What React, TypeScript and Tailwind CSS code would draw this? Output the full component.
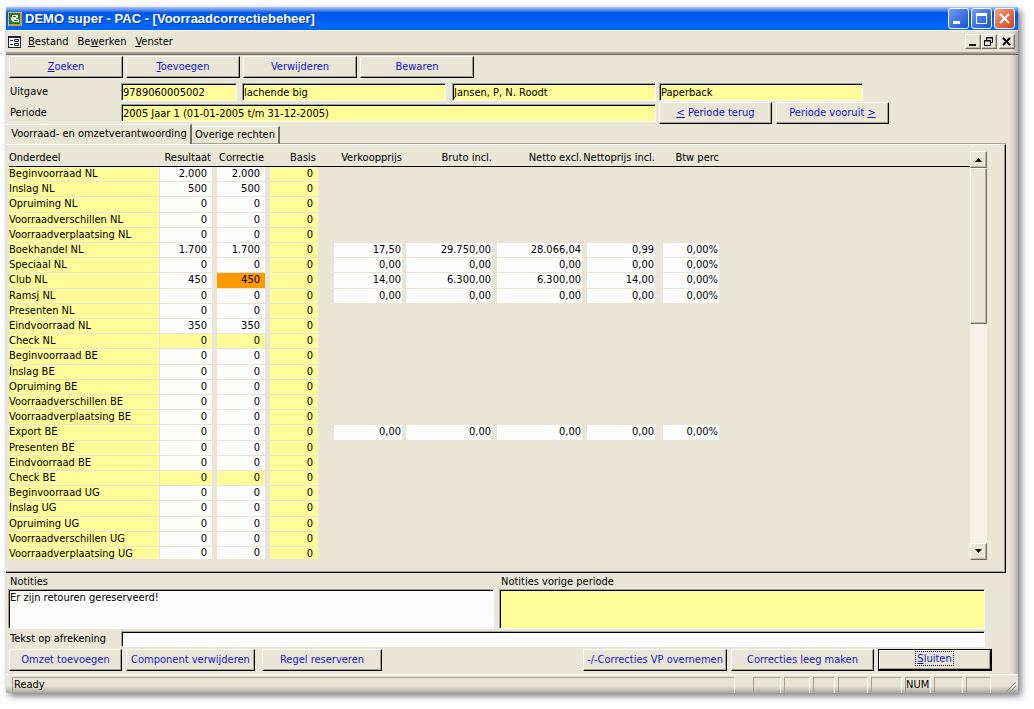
import { useState } from "react";
import type { ReactNode } from "react";
import clsx from "clsx";

interface StockRow {
  name: string;
  result: string;
  correction: string;
  prices?: string[];
  check?: boolean;
  active?: boolean;
}

const zero = (name: string): StockRow => ({ name, result: "0", correction: "0" });

const rows: StockRow[] = [
  { name: "Beginvoorraad NL", result: "2.000", correction: "2.000" },
  { name: "Inslag NL", result: "500", correction: "500" },
  zero("Opruiming NL"),
  zero("Voorraadverschillen NL"),
  zero("Voorraadverplaatsing NL"),
  {
    name: "Boekhandel NL",
    result: "1.700",
    correction: "1.700",
    prices: ["17,50", "29.750,00", "28.066,04", "0,99", "0,00%"],
  },
  { ...zero("Speciaal NL"), prices: ["0,00", "0,00", "0,00", "0,00", "0,00%"] },
  {
    name: "Club NL",
    result: "450",
    correction: "450",
    active: true,
    prices: ["14,00", "6.300,00", "6.300,00", "14,00", "0,00%"],
  },
  { ...zero("Ramsj NL"), prices: ["0,00", "0,00", "0,00", "0,00", "0,00%"] },
  zero("Presenten NL"),
  { name: "Eindvoorraad NL", result: "350", correction: "350" },
  { ...zero("Check NL"), check: true },
  zero("Beginvoorraad BE"),
  zero("Inslag BE"),
  zero("Opruiming BE"),
  zero("Voorraadverschillen BE"),
  zero("Voorraadverplaatsing BE"),
  { ...zero("Export BE"), prices: ["0,00", "0,00", "0,00", "0,00", "0,00%"] },
  zero("Presenten BE"),
  zero("Eindvoorraad BE"),
  { ...zero("Check BE"), check: true },
  zero("Beginvoorraad UG"),
  zero("Inslag UG"),
  zero("Opruiming UG"),
  zero("Voorraadverschillen UG"),
  zero("Voorraadverplaatsing UG"),
];

const priceColumns = [
  { label: "Verkoopprijs", gap: "pr-1" },
  { label: "Bruto incl.", gap: "pr-[5px]" },
  { label: "Netto excl.", gap: "pr-[5px]" },
  { label: "Nettoprijs incl.", gap: "pr-2" },
  { label: "Btw perc", gap: "pr-[2px]" },
];

const raised =
  "border border-t-white border-l-white border-r-black border-b-black shadow-[inset_-1px_-1px_0_#a5a192]";
const sunken =
  "border border-t-[#a5a192] border-l-[#a5a192] border-r-white border-b-white shadow-[inset_1px_1px_0_#000]";
const small =
  "border border-t-white border-l-white border-r-[#6f6c60] border-b-[#6f6c60] shadow-[inset_-1px_-1px_0_#bdb9a9] bg-[#e9e6d7]";

function PushButton({ className, children }: { className?: string; children: ReactNode }) {
  return (
    <button type="button" className={clsx("h-[22px] whitespace-nowrap text-[#1616c8]", raised, className)}>
      {children}
    </button>
  );
}

function Field({ label, value, className }: { label: string; value: string; className?: string }) {
  return (
    <input
      aria-label={label}
      readOnly
      value={value}
      className={clsx("h-[18px] min-w-0 bg-[#fdfc99] pl-px outline-none", sunken, className)}
    />
  );
}

function Cell({
  label,
  value,
  tall,
  fill = "bg-[#fdfdfd]",
  pad = "pr-[5px]",
}: {
  label: string;
  value: string;
  tall: boolean;
  fill?: string;
  pad?: string;
}) {
  return (
    <input
      aria-label={label}
      defaultValue={value}
      className={clsx(
        "block h-full w-full border-b border-[#e9e6d7] text-right outline-none",
        tall && "pb-px",
        fill,
        pad,
      )}
    />
  );
}

function TitleBar() {
  return (
    <header className="flex h-[23px] items-center bg-linear-to-b from-[#a9c8f6] via-[#0055e5] via-25% to-[#0066ff] to-80% pr-[3px] pl-[2px]">
      <svg width="14" height="14" viewBox="0 0 14 14" aria-hidden="true">
        <rect width="14" height="14" fill="#e8b84a" />
        <rect x="1" y="1" width="11" height="11" fill="#1d7a35" />
        <path d="M4 3h6v3H8v1h3v3H5L3 8V6l1-1z" fill="#eef3d8" />
        <path d="M5 4h3v1H5zM6 8h4v1H6z" fill="#1d7a35" />
        <path d="M13 1v12H1" fill="none" stroke="#b9822a" />
      </svg>
      <h1 className="ml-[3px] flex-1 font-['Liberation_Sans',Arial,sans-serif] text-[13px] leading-[20px] font-bold whitespace-nowrap text-white [text-shadow:1px_1px_0_#003399]">
        DEMO super - PAC - [Voorraadcorrectiebeheer]
      </h1>
      <div className="flex gap-[2px]">
        <button
          type="button"
          aria-label="Minimaliseren"
          className="h-[21px] w-[21px] rounded-[3px] border border-white bg-linear-to-br from-[#6f9cf5] to-[#1c4fd0]"
        >
          <svg width="19" height="19" viewBox="0 0 19 19">
            <rect x="4" y="12" width="7" height="3" fill="#fff" />
          </svg>
        </button>
        <button
          type="button"
          aria-label="Maximaliseren"
          className="h-[21px] w-[21px] rounded-[3px] border border-white bg-linear-to-br from-[#6f9cf5] to-[#1c4fd0]"
        >
          <svg width="19" height="19" viewBox="0 0 19 19">
            <path d="M4.500 4.500h10v10h-10z" fill="none" stroke="#fff" />
            <rect x="4" y="4" width="11" height="3" fill="#fff" />
          </svg>
        </button>
        <button
          type="button"
          aria-label="Afsluiten"
          className="h-[21px] w-[21px] rounded-[3px] border border-white bg-linear-to-br from-[#f0a080] to-[#cf3a12]"
        >
          <svg width="19" height="19" viewBox="0 0 19 19">
            <path d="M5 5l9 9M14 5l-9 9" stroke="#fff" strokeWidth="2" />
          </svg>
        </button>
      </div>
    </header>
  );
}

function MenuBar() {
  return (
    <div className="flex h-6 items-center border-t border-t-white border-b-2 border-b-[#a5a192] pr-[3px] pl-[2px]">
      <svg width="13" height="12" viewBox="0 0 13 12" aria-hidden="true">
        <rect x=".5" y=".5" width="12" height="11" fill="#fff" stroke="#1c2340" />
        <rect x="1" y="1" width="11" height="1" fill="#1c2340" />
        <path d="M2 4.500h3M2 8.500h3" stroke="#1c2340" />
        <path d="M6.500 3.500h4v2h-4zM6.500 7.500h4v2h-4z" fill="none" stroke="#1c2340" />
      </svg>
      <nav className="ml-[7px] flex flex-1 gap-[9px]">
        <button type="button"><u>B</u>estand</button>
        <button type="button">Be<u>w</u>erken</button>
        <button type="button"><u>V</u>enster</button>
      </nav>
      <div className="flex">
        <button type="button" aria-label="Venster minimaliseren" className={clsx("h-[15px] w-4", small)}>
          <svg width="14" height="13" viewBox="0 0 14 13">
            <rect x="3" y="9" width="7" height="2" />
          </svg>
        </button>
        <button type="button" aria-label="Venster herstellen" className={clsx("h-[15px] w-4", small)}>
          <svg width="14" height="13" viewBox="0 0 14 13" fill="none" stroke="#000">
            <path d="M4.500 5V2.500h6v5H9M4 3h7M2.500 5.500h6v5h-6zM2 6h7" />
          </svg>
        </button>
        <button type="button" aria-label="Venster sluiten" className={clsx("ml-[2px] h-[15px] w-4", small)}>
          <svg width="14" height="13" viewBox="0 0 14 13">
            <path d="M3 3l7 7M10 3l-7 7" stroke="#000" strokeWidth="2" />
          </svg>
        </button>
      </div>
    </div>
  );
}

function StockTable() {
  return (
    <table className="w-full table-fixed border-collapse">
      <colgroup>
        <col className="w-[151px]" />
        <col className="w-[57px]" />
        <col className="w-[53px]" />
        <col className="w-[64px]" />
        <col className="w-[72px]" />
        <col className="w-[91px]" />
        <col className="w-[90px]" />
        <col className="w-[76px]" />
        <col className="w-[58px]" />
        <col />
      </colgroup>
      <thead>
        <tr className="h-[15px] border-b border-black text-right whitespace-nowrap [&>th]:p-0 [&>th]:font-normal">
          <th className="text-left">Onderdeel</th>
          <th><span className="mr-[6px]">Resultaat</span></th>
          <th><span className="mr-[6px]">Correctie</span></th>
          <th><span className="mr-[18px]">Basis</span></th>
          {priceColumns.map((column) => (
            <th key={column.label}>
              <span className={clsx("flex justify-end", column.gap)}>{column.label}</span>
            </th>
          ))}
          <th />
        </tr>
      </thead>
      <tbody>
        {rows.map((row, i) => {
          const fill = row.check ? "bg-[#fdfc99]" : "bg-[#fdfdfd]";
          // every fifth row is a pixel taller, the last one is clipped by the form
          const tall = i % 5 === 2;
          const height = i === rows.length - 1 ? "h-[13px]" : tall ? "h-4" : "h-[15px]";
          return (
            <tr key={row.name} className={height}>
              <td className="p-0 pr-px">
                <div className={clsx("border-b border-[#e9e6d7] bg-[#fdfc99] leading-[14px]", height)}>{row.name}</div>
              </td>
              <td className="p-0 pr-[5px]">
                <div className={height}>
                  <Cell label={`${row.name} resultaat`} value={row.result} tall={tall} fill={fill} />
                </div>
              </td>
              <td className="p-0 pr-[5px]">
                <div className={height}>
                  <Cell
                    label={`${row.name} correctie`}
                    value={row.correction}
                    tall={tall}
                    fill={row.active ? "bg-[#ff9900]" : fill}
                  />
                </div>
              </td>
              <td className="p-0 pr-4">
                <div className={clsx("border-b border-[#e9e6d7] bg-[#fdfc99] pr-[5px] text-right leading-[14px]", height)}>
                  0
                </div>
              </td>
              {priceColumns.map((column, c) => (
                <td key={column.label} className={clsx("p-0", column.gap)}>
                  {row.prices && (
                    <div className={height}>
                      <Cell label={`${row.name} ${column.label}`} value={row.prices[c]} tall={tall} pad="pr-px" />
                    </div>
                  )}
                </td>
              ))}
              <td className="p-0" />
            </tr>
          );
        })}
      </tbody>
    </table>
  );
}

function ScrollBar() {
  return (
    <div className="flex w-[17px] flex-col bg-[#f5f3ea]">
      <button type="button" aria-label="Omhoog" className={clsx("flex h-[17px] items-center justify-center", small)}>
        <svg width="7" height="4" viewBox="0 0 7 4">
          <path d="M0 4l3.500-4L7 4z" />
        </svg>
      </button>
      <div className={clsx("h-[156px]", small)} />
      <div className="flex-1" />
      <button type="button" aria-label="Omlaag" className={clsx("flex h-[17px] items-center justify-center", small)}>
        <svg width="7" height="4" viewBox="0 0 7 4">
          <path d="M0 0l3.500 4L7 0z" />
        </svg>
      </button>
    </div>
  );
}

function StatusBar() {
  const slots = [
    { width: "w-7", text: "" },
    { width: "w-[26px]", text: "" },
    { width: "w-[22px]", text: "" },
    { width: "w-[30px]", text: "" },
    { width: "w-[31px]", text: "" },
    { width: "w-[26px]", text: "NUM" },
    { width: "w-[29px]", text: "" },
    { width: "w-[25px]", text: "" },
  ];
  const slot = "h-4 border-t border-l border-r border-t-[#a5a192] border-l-[#a5a192] border-r-white";
  return (
    <footer className="mt-[3px] flex h-[19px] items-end gap-[3px] border-t border-white bg-linear-to-b from-[#e9e6d7] from-60% to-[#a8a69d] pl-[6px]">
      <div className={clsx("mr-[15px] flex-1 pl-px", slot)}>Ready</div>
      {slots.map((s, i) => (
        <div key={i} className={clsx("shrink-0", slot, s.width)}>
          {s.text}
        </div>
      ))}
      <svg width="24" height="14" viewBox="0 0 24 14" className="shrink-0" stroke="#96938a">
        <path d="M11 14L22 3M15 14l7-7M19 14l3-3" />
      </svg>
    </footer>
  );
}

export default function App() {
  const [notes, setNotes] = useState("Er zijn retouren gereserveerd!");
  const [statement, setStatement] = useState("");

  return (
    <div className="bg-white pt-[7px] pr-4 pb-4 pl-[6px] font-['DejaVu_Sans_Condensed','DejaVu_Sans',sans-serif] text-[11px] leading-[14px] text-black">
      <div className="rounded-t-[4px] bg-[#e9e6d7] shadow-[3px_3px_7px_#77777f,inset_-6px_0_6px_-3px_#a8a69d]">
        <TitleBar />
        <MenuBar />

        <main className="border-t border-[#6f6c60]">
          {/* Toolbar */}
          <div className="flex gap-[3px] pt-px pl-[3px]">
            <PushButton className="w-[114px]"><u>Z</u>oeken</PushButton>
            <PushButton className="w-[114px]"><u>T</u>oevoegen</PushButton>
            <PushButton className="w-[114px]">Verwijderen</PushButton>
            <PushButton className="w-[114px]">Bewaren</PushButton>
          </div>

          {/* Edition and period */}
          <div className="mt-[5px] flex items-center pl-[3px]">
            <span className="w-28 pl-px">Uitgave</span>
            <Field label="Uitgave" value="9789060005002" className="w-[116px]" />
            <Field label="Titel" value="lachende big" className="ml-[5px] w-[204px]" />
            <Field label="Auteur" value="Jansen, P, N. Roodt" className="ml-[6px] w-[204px]" />
            <Field label="Uitvoering" value="Paperback" className="ml-[3px] w-[204px]" />
          </div>
          <div className="mt-px flex items-center pl-[3px]">
            <span className="w-28 pl-px">Periode</span>
            <Field label="Periode" value="2005 Jaar 1 (01-01-2005 t/m 31-12-2005)" className="w-[535px]" />
            <PushButton className="ml-[3px] w-[113px]"><u>&lt;</u> Periode terug</PushButton>
            <PushButton className="ml-1 w-[113px]">Periode vooruit <u>&gt;</u></PushButton>
          </div>

          {/* Tabs */}
          <div role="tablist" className="flex items-end">
            <button
              type="button"
              role="tab"
              aria-selected="true"
              className="h-5 w-[186px] border-t border-r-2 border-t-white border-r-[#6f6c60] pb-[2px] pl-[2px] whitespace-nowrap"
            >
              Voorraad- en omzetverantwoording
            </button>
            <button
              type="button"
              role="tab"
              aria-selected="false"
              className="h-[18px] w-[88px] border-t border-r-2 border-b border-t-white border-r-[#6f6c60] border-b-[#a5a192] whitespace-nowrap"
            >
              Overige rechten
            </button>
            <div className="mr-3 flex-1 border-b border-[#a5a192]" />
          </div>
          <section className="mr-3 flex border-t border-r border-b border-t-white border-r-black border-b-black pr-[18px] pb-3 pl-[3px] shadow-[inset_-1px_-1px_0_#a5a192]">
            <div className="min-w-0 flex-1 pt-[6px]">
              <StockTable />
            </div>
            <div className="flex pt-[6px]">
              <ScrollBar />
            </div>
          </section>

          {/* Notes */}
          <div className="mt-[2px] flex gap-[5px] pr-[33px] pl-[2px]">
            <label className="flex-1">
              <span className="block pl-[2px]">Notities</span>
              <textarea
                value={notes}
                onChange={(e) => setNotes(e.target.value)}
                className={clsx("block h-10 w-full resize-none bg-[#fdfdfd] pt-px pl-px outline-none", sunken)}
              />
            </label>
            <label className="flex-1">
              <span className="block pl-[2px]">Notities vorige periode</span>
              <textarea
                readOnly
                value=""
                className={clsx("block h-10 w-full resize-none bg-[#fdfc99] outline-none", sunken)}
              />
            </label>
          </div>
          <label className="mt-[2px] flex items-center pr-[33px] pl-1">
            <span className="w-[111px]">Tekst op afrekening</span>
            <input
              value={statement}
              onChange={(e) => setStatement(e.target.value)}
              className={clsx("h-4 flex-1 bg-[#fdfdfd] outline-none", sunken)}
            />
          </label>
          <div className="mt-[2px] flex pr-[26px] pl-[3px]">
            <PushButton className="w-[113px]">Omzet toevoegen</PushButton>
            <PushButton className="ml-1 w-[129px]">Component verwijderen</PushButton>
            <PushButton className="ml-[7px] w-[120px]">Regel reserveren</PushButton>
            <div className="flex-1" />
            <PushButton className="w-[144px]">-/-Correcties VP overnemen</PushButton>
            <PushButton className="ml-1 w-[143px]">Correcties leeg maken</PushButton>
            <button
              type="button"
              className="ml-1 h-[22px] w-[114px] border border-r-2 border-b-2 border-black text-[#1616c8] shadow-[inset_1px_1px_0_#fff,inset_-1px_-1px_0_#a5a192]"
            >
              <span className="border border-dotted border-black px-px">
                <u>S</u>luiten
              </span>
            </button>
          </div>
        </main>
        <StatusBar />
      </div>
    </div>
  );
}
